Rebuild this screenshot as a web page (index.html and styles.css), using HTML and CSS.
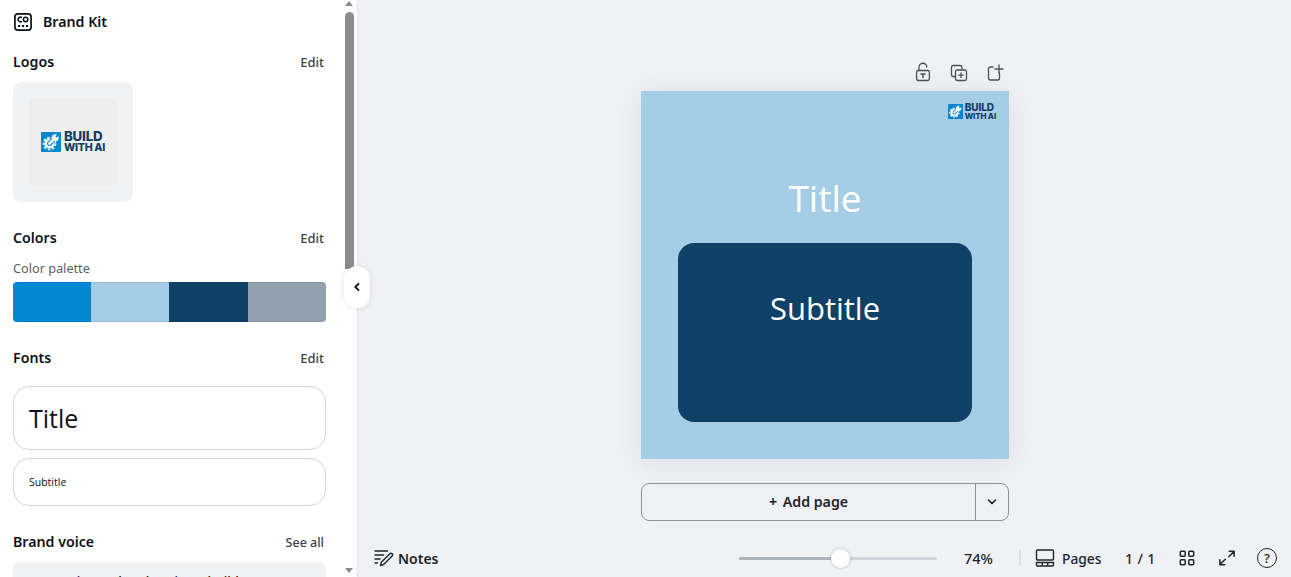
FILE: index.html
```html
<!DOCTYPE html>
<html lang="en">
<head>
<meta charset="utf-8">
<title>Brand Kit</title>
<link rel="stylesheet" href="styles.css">
</head>
<body>
<svg class="defs" width="0" height="0" aria-hidden="true">
  <symbol id="mark" viewBox="0 0 20 20">
    <rect width="20" height="20" rx="1" fill="#0a86cf"/>
    <circle cx="8.500" cy="11.500" r="3.800" fill="none" stroke="#fff" stroke-width="2.600"/>
    <circle cx="8.500" cy="11.500" r="6" fill="none" stroke="#fff" stroke-width="1.600" stroke-dasharray="2.600 1.600"/>
    <path d="M8.500 11.500 14 6" stroke="#0a86cf" stroke-width="5"/>
    <path d="M8.500 11.500 14 6" stroke="#fff" stroke-width="2.800" stroke-linecap="round"/>
    <circle cx="14.200" cy="5.800" r="3.500" fill="#fff"/>
    <path d="M15 5 17.500 2.500" stroke="#0a86cf" stroke-width="2.200"/>
  </symbol>
</svg>
<div class="app">
  <aside class="panel">
    <div class="panel-body">
      <header class="kit-head">
        <svg class="kit-icon" width="20" height="20" viewBox="0 0 20 20" fill="none" stroke="#0d1216" stroke-width="1.700">
          <rect x="1.900" y="1.900" width="16.200" height="16.200" rx="3.200"/>
          <path d="M8.900 5.700a2.300 2.300 0 1 0 0 3.600" stroke-width="1.500"/>
          <circle cx="12.600" cy="7.500" r="2.200" stroke-width="1.500"/>
          <path d="M4.900 14h2.200M8.900 14h2.200M12.900 14h2.200" stroke-width="2.200"/>
        </svg>
        <span>Brand Kit</span>
      </header>

      <div class="sec-head logos-head"><h2>Logos</h2><a>Edit</a></div>
      <div class="logo-tile">
        <div class="logo-inner">
          <div class="brand brand-lg">
            <svg class="brand-mark"><use href="#mark"/></svg>
            <div class="brand-text"><span class="bt-top">BUILD</span><span class="bt-bot">WITH AI</span></div>
          </div>
        </div>
      </div>

      <div class="sec-head colors-head"><h2>Colors</h2><a>Edit</a></div>
      <div class="palette-label">Color palette</div>
      <div class="palette">
        <span class="swatch sw-blue"></span>
        <span class="swatch sw-light"></span>
        <span class="swatch sw-navy"></span>
        <span class="swatch sw-grey"></span>
      </div>

      <div class="sec-head fonts-head"><h2>Fonts</h2><a>Edit</a></div>
      <div class="font-card font-title">Title</div>
      <div class="font-card font-sub">Subtitle</div>

      <div class="sec-head voice-head"><h2>Brand voice</h2><a class="see-all">See all</a></div>
      <div class="voice-card">Supportive and authentic, to build</div>
    </div>
    <div class="scrollbar">
      <span class="arrow arrow-up"></span>
      <span class="thumb"></span>
      <span class="arrow arrow-down"></span>
    </div>
  </aside>
  <button class="collapse" aria-label="Hide panel">
    <svg width="10" height="12" viewBox="0 0 10 12" fill="none" stroke="#0d1216" stroke-width="1.800" stroke-linecap="round" stroke-linejoin="round"><path d="M6.500 2.800 3.300 6l3.200 3.200"/></svg>
  </button>

  <main class="stage">
    <div class="work">
      <div class="page-col">
        <div class="page-tools">
          <svg width="20" height="20" viewBox="0 0 20 20" fill="none" stroke="#4d5157" stroke-width="1.300" stroke-linecap="round"><path d="M6 8.500V5.300a3.900 3.900 0 0 1 7.800-.3"/><rect x="3.600" y="8.500" width="12.800" height="10" rx="1.800"/><path d="M8 12h4M10 12v3.500" stroke-width="1.500"/></svg>
          <svg width="20" height="20" viewBox="0 0 20 20" fill="none" stroke="#4d5157" stroke-width="1.300" stroke-linecap="round"><path d="M6 14.500H4.300a1.800 1.800 0 0 1-1.800-1.800V5.300a1.800 1.800 0 0 1 1.800-1.800h6.900A1.800 1.800 0 0 1 13 5.300V7"/><rect x="6.500" y="8" width="11" height="10.500" rx="1.800"/><path d="M9.700 13.200h4.600M12 10.900v4.600"/></svg>
          <svg width="20" height="20" viewBox="0 0 20 20" fill="none" stroke="#4d5157" stroke-width="1.300" stroke-linecap="round"><path d="M8 5H5.500a2 2 0 0 0-2 2v9a2 2 0 0 0 2 2h7a2 2 0 0 0 2-2v-5"/><path d="M10 7h8M14 3v8"/></svg>
        </div>
        <section class="page">
          <div class="brand brand-sm">
            <svg class="brand-mark"><use href="#mark"/></svg>
            <div class="brand-text"><span class="bt-top">BUILD</span><span class="bt-bot">WITH AI</span></div>
          </div>
          <h1 class="page-title">Title</h1>
          <div class="page-card">Subtitle</div>
        </section>
        <div class="add-page">
          <button class="add-main"><span class="plus">+</span> Add page</button>
          <button class="add-more" aria-label="More">
            <svg width="12" height="8" viewBox="0 0 12 8" fill="none" stroke="#0d1216" stroke-width="1.500" stroke-linecap="round" stroke-linejoin="round"><path d="M2.500 2l3.500 3.500L9.500 2"/></svg>
          </button>
        </div>
      </div>
    </div>
    <footer class="bar">
      <div class="notes">
        <svg width="20" height="18" viewBox="0 0 20 18" fill="none" stroke="#1f252b" stroke-width="1.400" stroke-linecap="round" stroke-linejoin="round"><path d="M1 2h12.500M1 6h8.500M1 10h5M1 14h2.500"/><path d="M6.500 16.500l.8-3.300 8.500-8.500a1.500 1.500 0 0 1 2.300 2.300l-8.500 8.500z"/></svg>
        <span>Notes</span>
      </div>
      <div class="bar-right">
        <div class="slider"><span class="fill"></span><span class="knob"></span></div>
        <span class="zoom-val">74%</span>
        <span class="sep"></span>
        <div class="pages">
          <svg width="20" height="18" viewBox="0 0 20 18" fill="none" stroke="#1f252b" stroke-width="1.400"><rect x="1.500" y="1" width="17" height="10" rx="1"/><path d="M1.500 13.500h17V16a1 1 0 0 1-1 1h-15a1 1 0 0 1-1-1zM7.300 13.500V17M12.700 13.500V17"/></svg>
          <span>Pages</span>
        </div>
        <span class="count">1 / 1</span>
        <svg class="grid-ic" width="16" height="16" viewBox="0 0 18 18" fill="none" stroke="#1f252b" stroke-width="1.700"><rect x="1.500" y="1.500" width="5.500" height="5.500" rx="1"/><rect x="11" y="1.500" width="5.500" height="5.500" rx="1"/><rect x="1.500" y="11" width="5.500" height="5.500" rx="1"/><rect x="11" y="11" width="5.500" height="5.500" rx="1"/></svg>
        <svg class="full-ic" width="16" height="16" viewBox="0 0 18 18" fill="none" stroke="#1f252b" stroke-width="1.700" stroke-linecap="round" stroke-linejoin="round"><path d="M11.500 1.500h5.500V7M17 1.500l-6 6M6.500 16.500H1V11M1 16.500l6-6"/></svg>
        <span class="help">?</span>
      </div>
    </footer>
  </main>
</div>
</body>
</html>
```
FILE: styles.css
```css
* { box-sizing: border-box; }
html, body { margin: 0; height: 100%; overflow: hidden; }
body { font-family: "Noto Sans", sans-serif; color: #0d1216; }
.defs { position: absolute; }
.app { display: flex; width: 1291px; height: 577px; position: relative; }

.panel { width: 358px; flex: none; height: 577px; background: #fff; border-right: 1px solid #e4e6eb; display: flex; overflow: hidden; }
.panel-body { width: 344px; flex: none; padding: 0 18px 0 13px; }
.kit-head { display: flex; align-items: center; height: 44px; gap: 10px; font-size: 14.200px; font-weight: 600; }
.kit-head span { padding-bottom: 1px; }
.kit-icon { flex: none; }
.sec-head { display: flex; justify-content: space-between; align-items: center; height: 20px; }
.sec-head h2 { margin: 0; padding-bottom: 1px; font-size: 14.200px; font-weight: 600; color: #0d1216; }
.sec-head a { font-size: 13px; font-weight: 500; color: #3d4249; margin-right: 2px; }
.sec-head a.see-all { font-size: 12.500px; }
.logos-head { margin-top: 8px; }
.logo-tile { width: 120px; height: 120px; margin-top: 10px; background: #f1f2f4; border-radius: 8px; padding: 16px; }
.logo-inner { width: 88px; height: 88px; background: #eeeeee; border-radius: 6px; display: flex; align-items: center; justify-content: center; }
.brand { display: flex; align-items: center; }
.brand-text { display: flex; flex-direction: column; font-family: "Inter", sans-serif; font-weight: 800; color: #123e66; }
.brand-lg { gap: 3px; }
.brand-lg .brand-mark { width: 20px; height: 20px; }
.brand-lg .bt-top { font-size: 13.300px; line-height: 13.300px; letter-spacing: -.2px; }
.brand-lg .bt-bot { font-size: 10.700px; line-height: 10.700px; letter-spacing: -.3px; }
.brand-sm { gap: 2px; align-self: flex-end; margin: 11px 13px 0 0; }
.brand-sm .brand-mark { width: 15px; height: 15px; }
.brand-sm .bt-top { font-size: 10px; line-height: 10px; letter-spacing: -.1px; }
.brand-sm .bt-bot { font-size: 8.100px; line-height: 8.100px; letter-spacing: -.2px; }
.colors-head { margin-top: 26px; }
.palette-label { margin-top: 12px; font-size: 12.700px; line-height: 16px; color: #5b6068; }
.palette { display: flex; height: 40px; margin-top: 6px; border-radius: 4px; overflow: hidden; position: relative; }
.swatch { flex: 0 0 78px; box-shadow: inset 0 1px 0 rgba(0,0,0,.08), inset 0 -1px 0 rgba(0,0,0,.08); }
.sw-blue { background: #0288d1; }
.sw-light { background: #a5cde6; }
.sw-navy { background: #0f4066; flex-basis: 79px; }
.sw-grey { background: #92a1ad; }
.fonts-head { margin-top: 26px; }
.font-card { border: 1px solid #d1d4da; border-radius: 16px; padding-left: 15px; display: flex; align-items: center; font-family: "Open Sans", sans-serif; color: #0d1216; }
.font-title { height: 64px; margin-top: 18px; font-size: 25px; padding-bottom: 1px; }
.font-sub { height: 48px; margin-top: 8px; font-size: 10.500px; }
.voice-head { margin-top: 26px; }
.voice-card { height: 40px; margin-top: 10px; background: #f1f2f4; border-radius: 6px 6px 0 0; padding: 10px 14px; font-size: 13px; font-weight: 500; white-space: nowrap; }

.scrollbar { width: 13px; flex: none; position: relative; }
.thumb { position: absolute; left: 1px; top: 12px; width: 9px; height: 257px; background: #8c8c8c; border-radius: 5px 5px 0 0; }
.arrow { position: absolute; left: 1px; width: 0; height: 0; border-left: 4.500px solid transparent; border-right: 4.500px solid transparent; }
.arrow-up { top: 1px; border-bottom: 5px solid #8c8c8c; }
.arrow-down { bottom: 4px; border-top: 5px solid #8c8c8c; }

.collapse { position: absolute; left: 344px; top: 266px; width: 26px; height: 42px; padding: 0; border: 0; border-radius: 13px; background: #fff; box-shadow: 0 0 6px rgba(60,70,90,.14); display: flex; align-items: center; justify-content: center; }

.stage { flex: 1; background: #f0f1f5; display: flex; flex-direction: column; min-width: 0; }
.work { flex: 1; display: flex; justify-content: center; padding-left: 1px; }
.page-col { width: 368px; display: flex; flex-direction: column; margin-top: 61px; }
.page-tools { height: 30px; display: flex; justify-content: flex-end; gap: 16px; padding: 1px 4px 0 0; }
.page { height: 368px; background: #a5cde6; display: flex; flex-direction: column; align-items: center; box-shadow: 0 4px 30px rgba(60,70,90,.1); }
.page-title { margin: 54px 0 0; font-family: "Open Sans", sans-serif; font-weight: 400; font-size: 37px; line-height: 48px; color: #fff; }
.page-card { width: 294px; height: 179px; margin-top: 21px; background: #0f4066; border-radius: 16px; color: #fff; font-family: "Open Sans", sans-serif; font-size: 31px; line-height: 40px; padding-top: 45px; text-align: center; }
.add-page { display: flex; height: 38px; margin-top: 24px; border: 1px solid #8f949b; border-radius: 8px; }
.add-page button { background: none; border: 0; padding: 0; font-family: inherit; color: #1f252b; }
.add-main { flex: 1; font-size: 14.200px; font-weight: 600; padding-bottom: 2px !important; }
.plus { font-weight: 700; margin-right: 2px; }
.add-more { width: 33px; border-left: 1px solid #8f949b !important; display: flex; align-items: center; justify-content: center; }

.bar { height: 38px; flex: none; display: flex; align-items: center; justify-content: space-between; padding: 0 14px 0 16px; font-size: 14px; font-weight: 500; color: #1f252b; }
.notes, .pages { display: flex; align-items: center; }
.notes { gap: 5px; }
.notes span { margin-left: -1px; font-weight: 600; }
.bar-right { display: flex; align-items: center; }
.slider { width: 198px; height: 3px; background: #d1d4da; border-radius: 2px; position: relative; }
.fill { position: absolute; left: 0; top: 0; bottom: 0; width: 101px; background: #afb4bc; border-radius: 2px; }
.knob { position: absolute; left: 92px; top: -8px; width: 19px; height: 19px; background: #fff; border-radius: 50%; box-shadow: 0 0 3px rgba(30,40,60,.35); }
.zoom-val { margin-left: 27px; width: 30px; font-size: 14.500px; white-space: nowrap; }
.sep { width: 2px; height: 16px; background: #dcdee3; margin: 0 14px 0 25px; }
.pages { gap: 7px; }
.pages span { width: 39px; white-space: nowrap; font-size: 13.800px; }
.pages svg { flex: none; }
.count { margin-left: 24px; width: 30px; white-space: nowrap; letter-spacing: .4px; }
.grid-ic { margin-left: 24px; }
.full-ic { margin-left: 24px; }
.help { margin-left: 22px; width: 20px; height: 20px; border: 1.500px solid #1f252b; border-radius: 50%; display: flex; align-items: center; justify-content: center; font-size: 13px; }
```
